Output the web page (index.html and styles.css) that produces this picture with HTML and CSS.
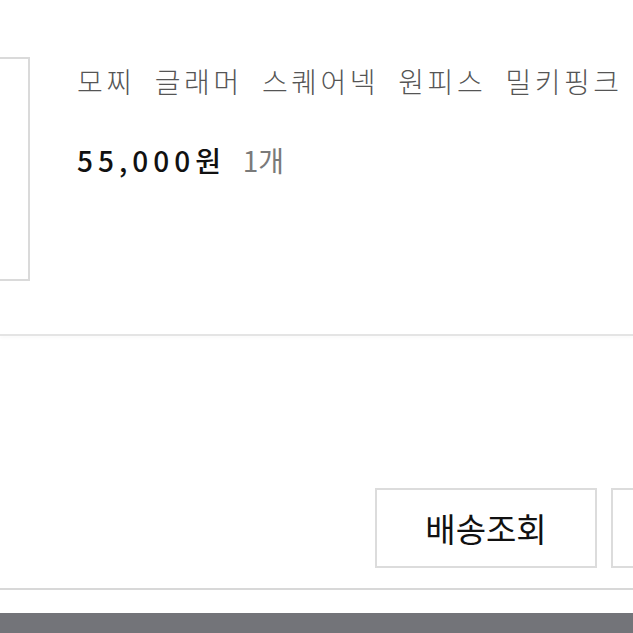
FILE: index.html
```html
<!DOCTYPE html>
<html lang="ko">
<head>
<meta charset="UTF-8" />
<meta name="viewport" content="width=device-width, initial-scale=1" />
<title>주문 상세</title>
<link rel="stylesheet" href="styles.css">
</head>
<body>

<!-- Ordered product -->
<div class="orderItem">
  <div class="orderThumb"></div>
  <div class="orderInfo">
    <p class="orderTitle">모찌 글래머 스퀘어넥 원피스 밀키핑크</p>
    <p class="orderPrice">55,000원 <span class="orderQty">1개</span></p>
  </div>
</div>

<div class="orderDivider"></div>

<!-- Action buttons -->
<div class="orderActions">
  <button class="orderBtn" type="button">배송조회</button>
  <button class="orderBtn" type="button"></button>
</div>

<div class="orderBottomLine"></div>
<div class="orderFooterBar"></div>

</body>
</html>
```

FILE: styles.css
```css
body {
  margin: 0;
  overflow: hidden;
  background: #fff;
  font-family: "Noto Sans CJK KR", "Noto Sans", sans-serif;
}

/* Product row */
.orderItem {
  display: flex;
  align-items: flex-start;
  padding-top: 57px;
}

.orderThumb {
  flex: none;
  width: 56px;
  height: 220px;
  margin-left: -30px;
  border: 2px solid #dadada;
  background: #fff;
}

.orderInfo {
  margin-left: 47px;
  white-space: nowrap;
}

.orderTitle {
  margin: 5px 0 0;
  font-size: 28px;
  line-height: 38px;
  font-weight: 300;
  letter-spacing: 3.5px;
  word-spacing: 8px;
  color: #555;
}

.orderPrice {
  margin: 41px 0 0;
  font-size: 28px;
  line-height: 38px;
  font-weight: 500;
  letter-spacing: 5px;
  color: #111;
}

.orderQty {
  margin-left: 4px;
  font-weight: 400;
  letter-spacing: 0;
  color: #7a7a7a;
}

/* Separators */
.orderDivider {
  margin-top: 53px;
  border-top: 2px solid #e4e4e4;
  box-shadow: 0 2px 3px rgba(0,0,0,0.03);
}

.orderActions {
  display: flex;
  gap: 14px;
  margin-top: 152px;
  padding-left: 375px;
  white-space: nowrap;
}

.orderBtn {
  flex: none;
  width: 222px;
  height: 80px;
  border: 2px solid #dcdcdc;
  background: #fff;
  font-family: inherit;
  font-size: 33px;
  color: #111;
  padding: 0;
}

.orderBottomLine {
  margin-top: 20px;
  border-top: 2px solid #d8d8d8;
}

.orderFooterBar {
  margin-top: 23px;
  height: 40px;
  background: #737479;
}
```
